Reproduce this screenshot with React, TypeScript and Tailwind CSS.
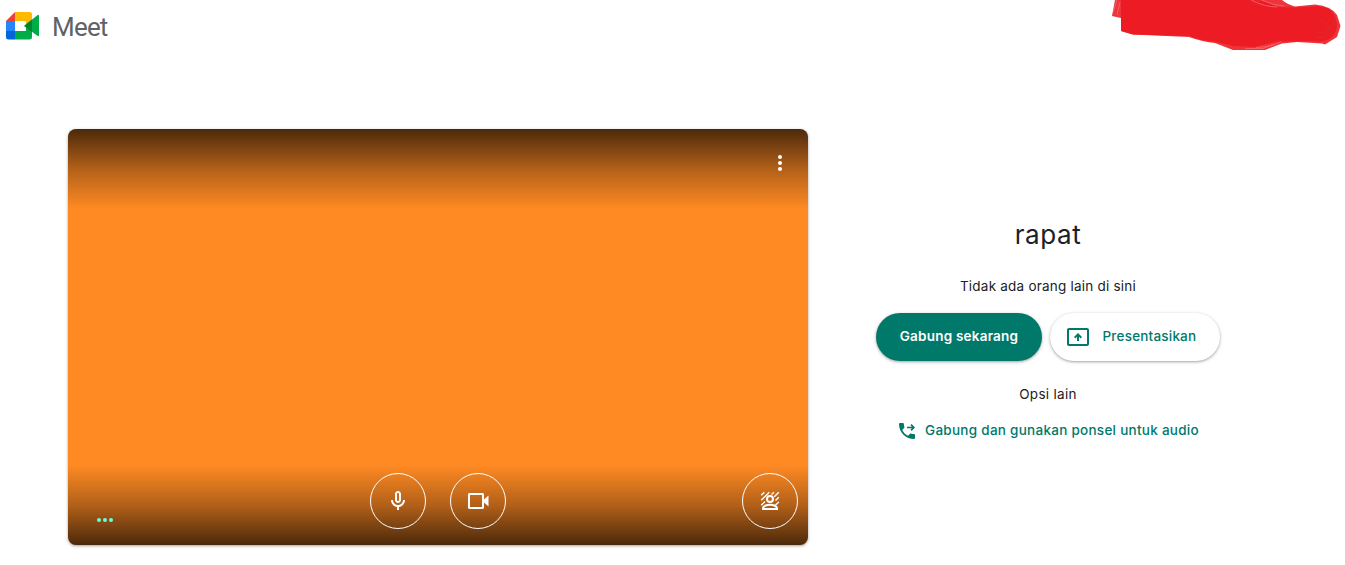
import React from 'react';

const Icon = ({ d, className = 'size-6' }: { d: string; className?: string }) => (
  <svg viewBox="0 0 24 24" className={className} fill="currentColor" aria-hidden="true">
    <path d={d} />
  </svg>
);

const MIC =
  'M12 14c1.66 0 3-1.34 3-3V5c0-1.66-1.34-3-3-3S9 3.34 9 5v6c0 1.66 1.34 3 3 3zm-1-9c0-.55.45-1 1-1s1 .45 1 1v6c0 .55-.45 1-1 1s-1-.45-1-1V5zm6 6c0 2.76-2.24 5-5 5s-5-2.24-5-5H5c0 3.53 2.61 6.43 6 6.92V21h2v-3.08c3.39-.49 6-3.39 6-6.92h-2z';
const CAMERA =
  'M18 10.48V5.5c0-.83-.67-1.5-1.5-1.5h-13C2.67 4 2 4.67 2 5.5v13c0 .83.67 1.5 1.5 1.5h13c.83 0 1.5-.67 1.5-1.5v-4.98l4.5 3.98v-11L18 10.48zM16 18H4V6h12v12z';
const MORE =
  'M12 8c1.1 0 2-.9 2-2s-.9-2-2-2-2 .9-2 2 .9 2 2 2zm0 2c-1.1 0-2 .9-2 2s.9 2 2 2 2-.9 2-2-.9-2-2-2zm0 6c-1.1 0-2 .9-2 2s.9 2 2 2 2-.9 2-2-.9-2-2-2z';
const PRESENT =
  'M21 3H3c-1.11 0-2 .89-2 2v14c0 1.1.89 2 2 2h18c1.11 0 2-.9 2-2V5c0-1.11-.89-2-2-2zm0 16.02H3V4.98h18v14.04zM11 16h2v-4.2l1.6 1.6L16 12l-4-4-4 4 1.4 1.4 1.6-1.6V16z';

function Logo() {
  return (
    <svg viewBox="0 0 33 28" className="h-7 w-[33px]" aria-hidden="true">
      <path d="M0 9 9 0v9z" fill="#ea4335" />
      <path d="M0 9h9v10H0z" fill="#2684fc" />
      <path d="M0 19h9v8.500H2.500Q0 27.500 0 25z" fill="#0066da" />
      <path d="M9 0h14.500Q26 0 26 2.500V8l-6 5V9H9z" fill="#ffba00" />
      <path d="M9 19h11v-5.500l6 5V25q0 2.500-2.500 2.500H9z" fill="#00ac47" />
      <path d="M18 14 31 3.500q2-1.500 2 .5v19q0 2-2 .5z" fill="#00ac47" />
      <path d="M18.500 13.800 26 7.500v12.500z" fill="#00832d" />
    </svg>
  );
}

function PhoneForwardIcon() {
  return (
    <svg viewBox="3 3 18 18" className="mt-0.5 size-4" fill="currentColor" aria-hidden="true">
      <path d="M20 15.500c-1.250 0-2.450-.2-3.570-.57-.35-.11-.74-.03-1.020.24l-2.200 2.200c-2.830-1.440-5.150-3.750-6.590-6.590l2.200-2.210c.28-.26.36-.65.25-1C8.700 6.450 8.500 5.250 8.500 4c0-.55-.45-1-1-1H4c-.55 0-1 .45-1 1 0 9.390 7.610 17 17 17 .55 0 1-.45 1-1v-3.500c0-.55-.45-1-1-1z" />
      <path d="M12 7.200h5.500l-1.600-1.600L17.200 4.200 21 8.100l-3.800 3.900-1.300-1.400L17.500 9H12z" />
    </svg>
  );
}

function BackgroundIcon() {
  return (
    <svg viewBox="0 0 24 24" className="size-6" fill="none" stroke="currentColor" aria-hidden="true">
      <path
        d="M3.200 6.300 6.300 3.200M3.200 11.300 11.300 3.200M3.200 16.300 7 12.500M13.500 5.500 16 3.200M16.300 7.700l4.500-4.500M17.500 11.500l3.300-3.300M17.500 16l3.300-3"
        strokeWidth="1.4"
      />
      <circle cx="12" cy="10" r="3" strokeWidth="2" />
      <path d="M5 20v-.8c0-2 3.500-3.400 7-3.400s7 1.400 7 3.400v.8z" strokeWidth="2" />
    </svg>
  );
}

function RoundButton({ children, label }: { children: React.ReactNode; label: string }) {
  return (
    <button aria-label={label} className="flex size-14 items-center justify-center rounded-full border border-white text-white">
      {children}
    </button>
  );
}

export default function App() {
  return (
    <div className="flex h-[565px] w-[1345px] flex-col overflow-hidden bg-white font-['Inter',sans-serif] text-[#202124]">
      <header className="flex h-[129px] items-start justify-between">
        <div className="flex items-start pt-3 pl-1.5">
          <Logo />
          <span className="mt-px ml-[13px] font-['Roboto',sans-serif] text-[26px] leading-7 tracking-[-0.8px] text-[#5f6368]">Meet</span>
        </div>
        <svg viewBox="0 0 240 56" className="h-14 w-60" aria-hidden="true">
          <path d="M10 0 7 16 16 18V31L28 34.500 84 37Q98 42 110 43L128 50H160L177 43.500 192 42 217 43.500 220 44.500 232 37 235.500 26 232 15Q226 6 210 4.500L190 6.500Q182 4 177 0z" fill="#ee333a" />
          <path d="M16 0V31L28 34.500 84 36Q98 41 110 41.500L128 46 150 47 172 41.500 208 41Q220 43 227 37 232 31 232 24 231 14 224 9 216 5 208 6.500L190 7.500 173 7Q160 0 145 0z" fill="#ed1c24" />
          <path d="M146 0q14 7 26 7M157 0q11 5.500 22 6M8 13l4-13M12 15l3-13M151 47.500q18-1 25-6M140 48.500h18l10-4" fill="none" stroke="#f56a70" strokeWidth=".8" />
          <path d="M210 22q9-5 12 2t5 4M209 31q8 5 18-3M212 38q9 0 15-6M224 9q8 6 5 20" fill="none" stroke="#dc2a30" strokeWidth="1" />
        </svg>
      </header>

      <div className="flex pl-[68px]">
        <section className="flex h-[416px] w-[740px] flex-col justify-between rounded-lg bg-[#ff8a23] bg-[linear-gradient(to_bottom,rgba(0,0,0,.7)_0,rgba(0,0,0,.3)_40px,transparent_80px,transparent_336px,rgba(0,0,0,.3)_376px,rgba(0,0,0,.7)_416px)] shadow-[0_1px_2px_rgba(60,64,67,.3),0_1px_3px_1px_rgba(60,64,67,.15)]">
          <div className="flex justify-end pt-[22px] pr-4 text-white">
            <Icon d={MORE} />
          </div>
          <div className="flex h-[72px] items-start">
            <div className="mt-[45px] ml-[29px] flex w-[273px] gap-0.5">
              <i className="size-1 rounded-full bg-[#64ffda]" />
              <i className="size-1 rounded-full bg-[#64ffda]" />
              <i className="size-1 rounded-full bg-[#64ffda]" />
            </div>
            <div className="flex flex-1 gap-6">
              <RoundButton label="Mikrofon"><Icon d={MIC} /></RoundButton>
              <RoundButton label="Kamera"><Icon d={CAMERA} /></RoundButton>
            </div>
            <div className="mr-2.5">
              <RoundButton label="Latar belakang"><BackgroundIcon /></RoundButton>
            </div>
          </div>
        </section>

        <section className="ml-[68px] flex w-[344px] flex-col items-center pt-[88px]">
          <h1 className="text-[26px] leading-9 tracking-[0.6px]">rapat</h1>
          <p className="mt-[23px] text-[13.5px] leading-5 tracking-[0.22px]">Tidak ada orang lain di sini</p>
          <div className="mt-[17px] flex gap-2">
            <button className="h-12 w-[166px] rounded-full bg-[#00796b] pb-0.5 text-[13.5px] font-semibold tracking-[0.22px] text-white shadow-[0_1px_2px_rgba(60,64,67,.3),0_1px_3px_1px_rgba(60,64,67,.15)]">Gabung sekarang</button>
            <button className="flex h-12 w-[170px] items-center rounded-full bg-white pl-4 text-[13.5px] font-medium tracking-[0.2px] text-[#00796b] shadow-[0_1px_2px_rgba(60,64,67,.3),0_1px_3px_1px_rgba(60,64,67,.15)]">
              <Icon d={PRESENT} />
              <span className="ml-[12.5px] pb-0.5">Presentasikan</span>
            </button>
          </div>
          <p className="mt-[23px] text-[13.5px] leading-5 tracking-[0.3px]">Opsi lain</p>
          <a className="mt-4 ml-0.5 flex items-center text-[13.5px] leading-5 font-medium tracking-[0.27px] text-[#00796b]">
            <PhoneForwardIcon />
            <span className="ml-2.5 whitespace-nowrap">Gabung dan gunakan ponsel untuk audio</span>
          </a>
        </section>
      </div>
    </div>
  );
}
